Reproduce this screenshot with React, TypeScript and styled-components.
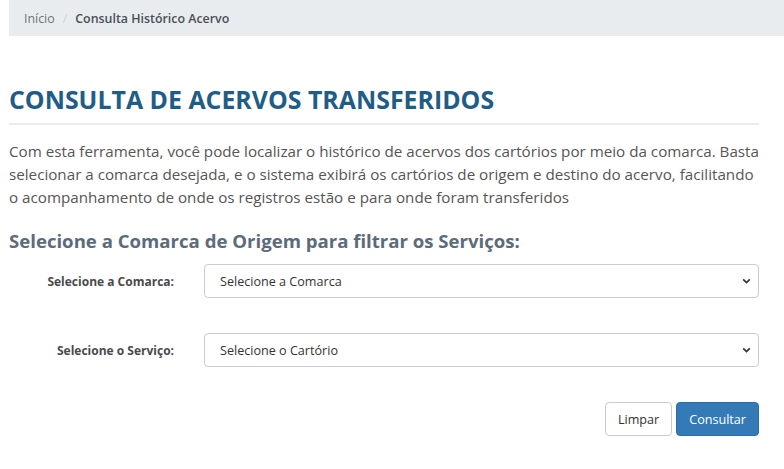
import React from "react";
import styled, { createGlobalStyle } from "styled-components";

const Global = createGlobalStyle`
  html, body { margin: 0; padding: 0; background: #fff; }
  body { font-family: "Open Sans", "Noto Sans", sans-serif; color: #555; overflow: hidden; }
  * { box-sizing: border-box; }
`;

const Page = styled.div`
  padding-left: 9px;
  width: 784px;
`;

const Breadcrumb = styled.nav`
  height: 36px;
  background: #e9ecef;
  display: flex;
  align-items: center;
  padding-left: 15px;
  font-size: 12.4px;
  width: 800px;
`;

const Crumb = styled.span<{ $active?: boolean }>`
  color: ${(p) => (p.$active ? "#495057" : "#6c757d")};
  font-weight: ${(p) => (p.$active ? 600 : 400)};
`;

const Sep = styled.span`
  color: #ced4da;
  padding: 0 8px;
`;

const Content = styled.main`
  width: 750px;
  padding-top: 48px;
`;

const Title = styled.h1`
  margin: 0;
  font-size: 24.9px;
  font-weight: 700;
  color: #1f5d87;
  line-height: 30px;
  padding-bottom: 9px;
  border-bottom: 2px solid #e9ecef;
`;

const Lead = styled.p`
  margin: 15px 0 0;
  font-size: 15.2px;
  line-height: 23px;
  color: #555;
`;

const Subtitle = styled.h2`
  margin: 19px 0 0;
  font-size: 18.6px;
  line-height: 26px;
  font-weight: 700;
  color: #5c6b7a;
`;

const Form = styled.form`
  display: flex;
  flex-direction: column;
  gap: 35px;
  margin-top: 10px;
`;

const Row = styled.div`
  display: grid;
  grid-template-columns: 165px 1fr;
  column-gap: 30px;
  align-items: center;
`;

const Label = styled.label`
  text-align: right;
  font-size: 12px;
  font-weight: 700;
  color: #4a4a4a;
`;

const SelectBox = styled.div`
  position: relative;
  height: 34px;
  border: 1px solid #ccc;
  border-radius: 4px;
  display: flex;
  align-items: center;
  padding-left: 15px;
  font-size: 12.6px;
  color: #333;
  background: #fff;
`;

const Chevron = styled.svg`
  position: absolute;
  right: 7px;
  top: 50%;
  transform: translateY(-50%);
`;

const Actions = styled.div`
  display: flex;
  justify-content: flex-end;
  gap: 4px;
`;

const Button = styled.button<{ $primary?: boolean }>`
  height: 34px;
  padding: 0 12px;
  border-radius: 4px;
  font-family: inherit;
  font-size: 12.6px;
  border: 1px solid ${(p) => (p.$primary ? "#2e6da4" : "#ccc")};
  background: ${(p) => (p.$primary ? "#337ab7" : "#fff")};
  color: ${(p) => (p.$primary ? "#fff" : "#333")};
`;

const Select = ({ text, id }: { text: string; id: string }) => (
  <SelectBox id={id}>
    {text}
    <Chevron width="9" height="7" viewBox="0 0 9 7">
      <path d="M1.2 1.8 L4.5 5 L7.8 1.8" fill="none" stroke="#333" strokeWidth="1.7" />
    </Chevron>
  </SelectBox>
);

export default function App() {
  return (
    <Page>
      <Global />
      <Breadcrumb>
        <Crumb>Início</Crumb>
        <Sep>/</Sep>
        <Crumb $active>Consulta Histórico Acervo</Crumb>
      </Breadcrumb>
      <Content>
        <Title>CONSULTA DE ACERVOS TRANSFERIDOS</Title>
        <Lead>
          Com esta ferramenta, você pode localizar o histórico de acervos dos cartórios por meio da comarca. Basta
          selecionar a comarca desejada, e o sistema exibirá os cartórios de origem e destino do acervo, facilitando o
          acompanhamento de onde os registros estão e para onde foram transferidos
        </Lead>
        <Subtitle>Selecione a Comarca de Origem para filtrar os Serviços:</Subtitle>
        <Form>
          <Row>
            <Label htmlFor="comarca">Selecione a Comarca:</Label>
            <Select id="comarca" text="Selecione a Comarca" />
          </Row>
          <Row>
            <Label htmlFor="servico">Selecione o Serviço:</Label>
            <Select id="servico" text="Selecione o Cartório" />
          </Row>
          <Actions>
            <Button type="button">Limpar</Button>
            <Button type="button" $primary>
              Consultar
            </Button>
          </Actions>
        </Form>
      </Content>
    </Page>
  );
}
